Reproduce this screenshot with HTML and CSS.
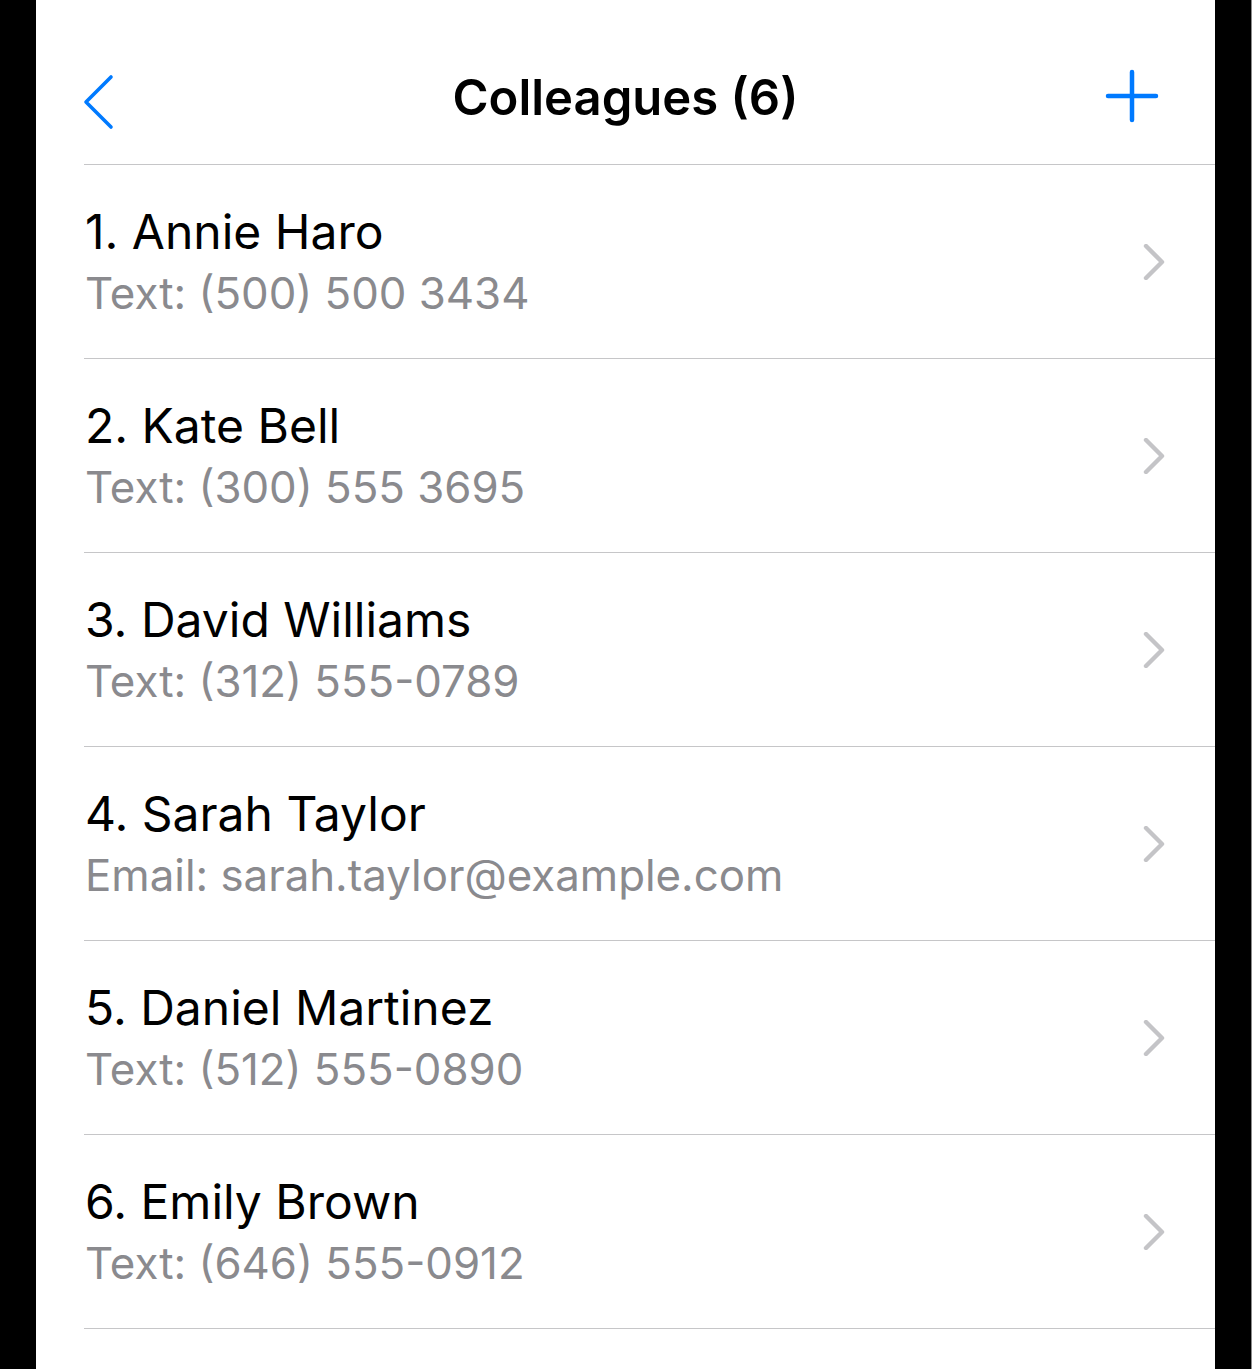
FILE: index.html
```html
<!DOCTYPE html>
<html>
<head>
<meta charset="utf-8">
<link rel="stylesheet" href="styles.css">
</head>
<body>
<div class="frame">
  <div class="screen">
    <header class="navbar">
      <button class="nav-btn back" aria-label="Back">
        <svg width="32" height="56" viewBox="0 0 32 56"><polyline points="28,3 3,28 28,53" fill="none" stroke="#007aff" stroke-width="3.6" stroke-linecap="round" stroke-linejoin="round"/></svg>
      </button>
      <h1 class="title">Colleagues (6)</h1>
      <button class="nav-btn add" aria-label="Add">
        <svg width="56" height="56" viewBox="0 0 56 56"><path d="M28 4 V52 M4 28 H52" fill="none" stroke="#007aff" stroke-width="4.5" stroke-linecap="round"/></svg>
      </button>
    </header>
    <ul class="list">
      <li class="row"><div class="text"><div class="name">1. Annie Haro</div><div class="detail">Text: (500) 500 3434</div></div><svg class="chev" width="24" height="36" viewBox="0 0 24 36"><polyline points="3,2 19,18 3,34" fill="none" stroke="#c4c4c7" stroke-width="4.4" stroke-linecap="round" stroke-linejoin="round"/></svg></li>
      <li class="row"><div class="text"><div class="name">2. Kate Bell</div><div class="detail">Text: (300) 555 3695</div></div><svg class="chev" width="24" height="36" viewBox="0 0 24 36"><polyline points="3,2 19,18 3,34" fill="none" stroke="#c4c4c7" stroke-width="4.4" stroke-linecap="round" stroke-linejoin="round"/></svg></li>
      <li class="row"><div class="text"><div class="name">3. David Williams</div><div class="detail">Text: (312) 555-0789</div></div><svg class="chev" width="24" height="36" viewBox="0 0 24 36"><polyline points="3,2 19,18 3,34" fill="none" stroke="#c4c4c7" stroke-width="4.4" stroke-linecap="round" stroke-linejoin="round"/></svg></li>
      <li class="row"><div class="text"><div class="name">4. Sarah Taylor</div><div class="detail">Email: sarah.taylor@example.com</div></div><svg class="chev" width="24" height="36" viewBox="0 0 24 36"><polyline points="3,2 19,18 3,34" fill="none" stroke="#c4c4c7" stroke-width="4.4" stroke-linecap="round" stroke-linejoin="round"/></svg></li>
      <li class="row"><div class="text"><div class="name">5. Daniel Martinez</div><div class="detail">Text: (512) 555-0890</div></div><svg class="chev" width="24" height="36" viewBox="0 0 24 36"><polyline points="3,2 19,18 3,34" fill="none" stroke="#c4c4c7" stroke-width="4.4" stroke-linecap="round" stroke-linejoin="round"/></svg></li>
      <li class="row"><div class="text"><div class="name">6. Emily Brown</div><div class="detail">Text: (646) 555-0912</div></div><svg class="chev" width="24" height="36" viewBox="0 0 24 36"><polyline points="3,2 19,18 3,34" fill="none" stroke="#c4c4c7" stroke-width="4.4" stroke-linecap="round" stroke-linejoin="round"/></svg></li>
    </ul>
  </div>
</div>
</body>
</html>
```
FILE: styles.css
```css
html, body {
  margin: 0;
  padding: 0;
  background: #000;
}
.frame {
  display: flex;
  width: 1252px;
  height: 1369px;
  padding: 0 36px 0 36px;
  box-sizing: border-box;
  border-right: 1px solid #8c8c8c;
  overflow: hidden;
}
.screen {
  flex: 1;
  background: #fff;
  font-family: Inter, "Noto Sans", sans-serif;
  color: #000;
}
.navbar {
  height: 164px;
  display: grid;
  grid-template-columns: 1fr auto 1fr;
  align-items: start;
}
.nav-btn {
  background: none;
  border: 0;
  padding: 0;
  display: flex;
}
.back {
  justify-self: start;
  margin-left: 47px;
  margin-top: 74px;
}
.add {
  justify-self: end;
  margin-right: 55px;
  margin-top: 68px;
}
.title {
  margin: 68px 0 0;
  font-size: 49px;
  line-height: 60px;
  font-weight: 600;
  text-align: center;
  white-space: nowrap;
}
.list {
  list-style: none;
  margin: 0 0 0 48px;
  padding: 0;
  border-top: 1px solid #c6c6c8;
}
.row {
  height: 193px;
  border-bottom: 1px solid #c6c6c8;
  display: flex;
  align-items: center;
  justify-content: space-between;
}
.text {
  padding-top: 4px;
  padding-left: 1px;
}
.name {
  font-size: 48px;
  line-height: 61px;
}
.detail {
  font-size: 43.8px;
  line-height: 64px;
  color: #8a8a8e;
}
.chev {
  margin-right: 48px;
}
```
